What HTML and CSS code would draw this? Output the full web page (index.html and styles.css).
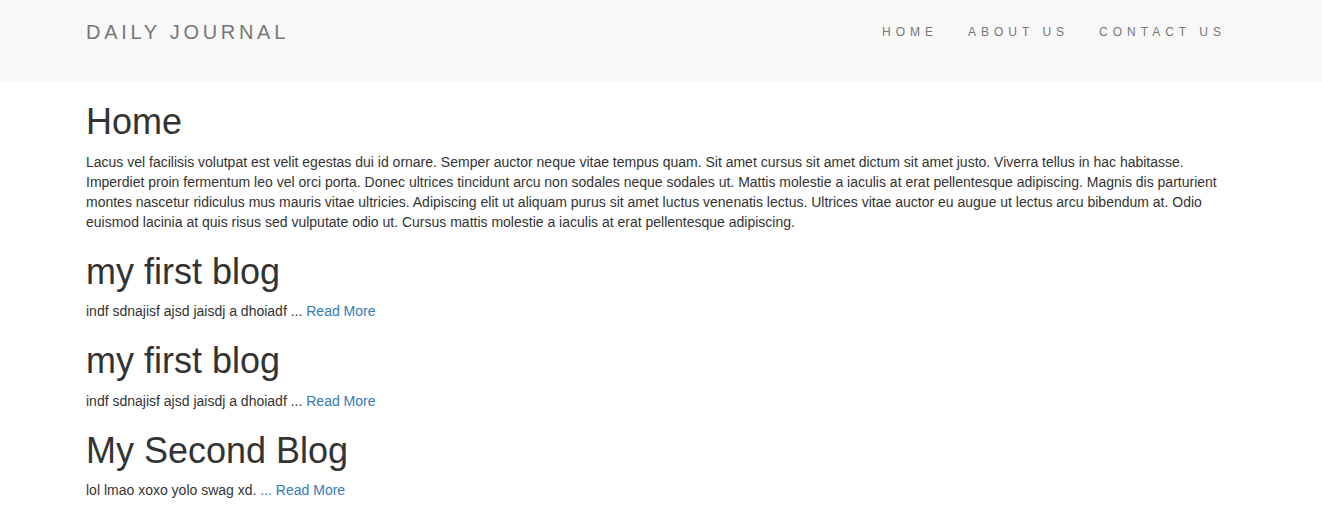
FILE: index.html
```html
<!DOCTYPE html>
<html lang="en">
<head>
<meta charset="utf-8">
<title>Daily Journal</title>
<link rel="stylesheet" href="styles.css">
</head>
<body>
<nav class="navbar">
  <div class="nav-inner">
    <a class="brand" href="#">DAILY JOURNAL</a>
    <ul class="nav-links">
      <li><a href="#">HOME</a></li>
      <li><a href="#">ABOUT US</a></li>
      <li><a href="#">CONTACT US</a></li>
    </ul>
  </div>
</nav>
<main class="content">
  <h1>Home</h1>
  <p>Lacus vel facilisis volutpat est velit egestas dui id ornare. Semper auctor neque vitae tempus quam. Sit amet cursus sit amet dictum sit amet justo. Viverra tellus in hac habitasse. Imperdiet proin fermentum leo vel orci porta. Donec ultrices tincidunt arcu non sodales neque sodales ut. Mattis molestie a iaculis at erat pellentesque adipiscing. Magnis dis parturient montes nascetur ridiculus mus mauris vitae ultricies. Adipiscing elit ut aliquam purus sit amet luctus venenatis lectus. Ultrices vitae auctor eu augue ut lectus arcu bibendum at. Odio euismod lacinia at quis risus sed vulputate odio ut. Cursus mattis molestie a iaculis at erat pellentesque adipiscing.</p>
  <h1>my first blog</h1>
  <p>indf sdnajisf ajsd jaisdj a dhoiadf ... <a href="#">Read More</a></p>
  <h1>my first blog</h1>
  <p>indf sdnajisf ajsd jaisdj a dhoiadf ... <a href="#">Read More</a></p>
  <h1>My Second Blog</h1>
  <p>lol lmao xoxo yolo swag xd. <a href="#">... Read More</a></p>
</main>
</body>
</html>
```

FILE: styles.css
```css
html, body {
  margin: 0;
  padding: 0;
}
body {
  font-family: "Liberation Sans", Arial, Helvetica, sans-serif;
  font-size: 14px;
  line-height: 20px;
  color: #333;
  background: #fff;
}
a {
  color: #337ab7;
  text-decoration: none;
}
.navbar {
  background: #f8f8f8;
  height: 82px;
  box-sizing: border-box;
  padding: 22px 86px 0;
}
.nav-inner {
  display: flex;
  justify-content: space-between;
  align-items: flex-start;
}
.brand {
  font-size: 20px;
  line-height: 20px;
  letter-spacing: 3.7px;
  color: #777;
}
.nav-links {
  list-style: none;
  margin: 0 -5px 0 0;
  padding: 0;
  display: flex;
}
.nav-links a {
  display: block;
  padding: 0 15px;
  font-size: 12px;
  line-height: 20px;
  letter-spacing: 5px;
  color: #777;
}
.content {
  padding: 0 86px;
}
h1 {
  font-size: 36px;
  font-weight: 500;
  line-height: 1.1;
  margin: 20px 0 10px;
}
p {
  margin: 0 0 10px;
}
```
